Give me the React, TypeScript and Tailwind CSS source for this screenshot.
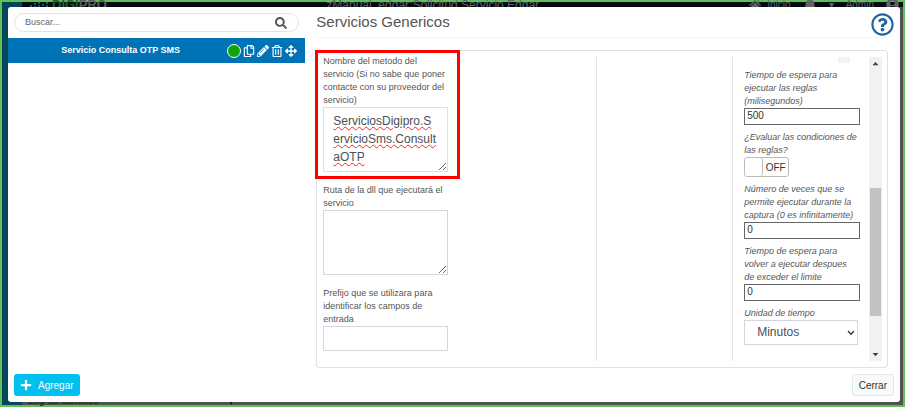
import { useState } from "react";
import {
  FaArrowsAlt,
  FaBell,
  FaHome,
  FaPencilAlt,
  FaPlus,
  FaRegCopy,
  FaRegQuestionCircle,
  FaRegTrashAlt,
  FaSearch,
  FaUserCircle,
} from "react-icons/fa";

const ACTIONS = [
  { id: "copy", label: "Copiar", Icon: FaRegCopy },
  { id: "edit", label: "Editar", Icon: FaPencilAlt },
  { id: "delete", label: "Eliminar", Icon: FaRegTrashAlt },
  { id: "move", label: "Mover", Icon: FaArrowsAlt },
];

// Dimmed page behind the dialog, only its edges are visible
function Backdrop() {
  return (
    <div className="absolute inset-0 -z-10 flex flex-col bg-[#505153]" aria-hidden="true">
      <div className="flex h-[5px] items-center bg-[#020c10] text-[12px] leading-3 text-[#606366]">
        <div className="flex w-1/3 items-center">
          <span className="h-[5px] w-5 bg-[#05465a]" />
          <svg viewBox="0 0 18 5" className="ml-2 h-[5px] w-[18px]" fill="#0f5a70">
            <path d="M0 3h2v2H0zM4 1h2v2H4zM4 4h2v1H4zM8 0h2v2H8zM8 3h2v2H8zM12 2h2v2h-2zM16 0h2v2h-2zM16 3h2v2h-2z" />
          </svg>
          <span className="ml-1 text-[13px] leading-3 font-bold text-[#5b5f61]">
            <span className="text-[#2a5a35]">DIGI</span>PRO
          </span>
        </div>
        <div className="flex flex-1 items-center justify-between pl-[24px]">
          <span>zManual_edgar:Solicitud Servicio Edgar</span>
          <div className="flex items-center gap-3 pr-1 text-[10px]">
            <span className="flex items-center gap-1.5"><FaHome size={12} /> Inicio</span>
            <FaBell size={14} />
            <span>▾</span>
            <span>Admin</span>
            <FaUserCircle size={13} />
          </div>
        </div>
      </div>
      <div className="flex flex-1 items-end">
        <div className="h-full w-5 bg-[#05465a]" />
        <span className="pl-1.5 text-[10px] leading-2 text-[#1d1d1d]">Log de cambios</span>
        <FaPlus size={10} className="ml-[127px] text-[#1d1d1d]" />
      </div>
    </div>
  );
}

function TextField({ id, label, value }: { id: string; label: string; value: string }) {
  return (
    <div className="flex flex-col">
      <label htmlFor={id} className="pr-0.5 italic">
        {label}
      </label>
      <input
        id={id}
        defaultValue={value}
        className="h-[17px] w-full border border-[#666] bg-white px-0.5 pb-0.5 text-[10px] text-[#333] outline-none"
      />
    </div>
  );
}

function Sidebar() {
  return (
    <aside className="w-1/3">
      <div className="mx-1.5 mt-1.5 flex h-[19px] items-center rounded-full border border-[#e3e3e3] pr-[11px] pl-[10px]">
        <input
          type="text"
          aria-label="Buscar"
          placeholder="Buscar..."
          className="min-w-0 flex-1 text-[9px] outline-none placeholder:text-[#666]"
        />
        <button aria-label="Buscar">
          <FaSearch size={12} className="text-[#555]" />
        </button>
      </div>
      <div className="mt-1.5 flex h-[25px] items-center bg-[#0073b7] pr-2 pl-1.5 text-white">
        <span className="flex-1 text-center text-[9px] font-bold">Servicio Consulta OTP SMS</span>
        <div className="flex items-center gap-0.5">
          <span className="size-[14px] rounded-full border border-white bg-[#0ca50c]" />
          {ACTIONS.map(({ id, label, Icon }) => (
            <button key={id} aria-label={label}>
              <Icon size={12} />
            </button>
          ))}
        </div>
      </div>
    </aside>
  );
}

export default function App() {
  const [metodo, setMetodo] = useState("ServiciosDigipro.ServicioSms.ConsultaOTP");
  const [evaluar, setEvaluar] = useState(false);

  return (
    <div className="flex min-h-screen bg-white pr-px pb-px font-['Liberation_Sans',sans-serif] text-[#555]">
      <div className="relative isolate flex flex-1 border-2 border-[#5fc05a]">
        <Backdrop />

        <div role="dialog" aria-labelledby="titulo" className="mt-[5px] mr-[3px] mb-[3px] ml-1.5 flex flex-1 flex-col rounded-[3px] bg-white">
          <div className="flex flex-1">
            <Sidebar />

            <main className="flex flex-1 flex-col pr-3 pl-[11px]">
              <header className="flex h-[31px] items-center justify-between border-b border-[#f4f4f4]">
                <h1 id="titulo" className="text-[15px] leading-5">
                  Servicios Genericos
                </h1>
                <button aria-label="Ayuda" className="-mr-1.5 pt-1">
                  <FaRegQuestionCircle size={23} className="text-[#1f63a0]" />
                </button>
              </header>

              <section className="mt-3 grid flex-1 grid-cols-[49%_24%_27%] rounded-[3px] border border-[#dee2e6] pt-1 pb-1.5 text-[9px] leading-[13px]">
                {/* Campos del servicio */}
                <div className="flex flex-col gap-3 pb-2.5 pl-1.5">
                  <div className="relative flex w-[125px] flex-col">
                    <label htmlFor="metodo">
                      Nombre del metodo del servicio (Si no sabe que poner contacte con su proveedor del servicio)
                    </label>
                    <textarea
                      id="metodo"
                      spellCheck={false}
                      value={metodo}
                      onChange={(e) => setMetodo(e.target.value)}
                      className="h-[65px] w-full resize-y overflow-hidden border border-[#dcdfe5] py-1 pr-2.5 pl-[9px] text-[12px] leading-[18px] break-all text-[#495057] underline decoration-[#f22] decoration-wavy decoration-1 underline-offset-1 outline-none"
                    />
                    <div className="pointer-events-none absolute -top-[5px] -right-3 -bottom-[7px] -left-2 border-3 border-[#f00]" />
                  </div>
                  <div className="flex w-[125px] flex-col">
                    <label htmlFor="ruta">Ruta de la dll que ejecutará el servicio</label>
                    <textarea
                      id="ruta"
                      className="h-[65px] w-full resize-y border border-[#d2d6de] px-[9px] py-1 text-[12px] outline-none"
                    />
                  </div>
                  <div className="flex w-[125px] flex-col">
                    <label htmlFor="prefijo">Prefijo que se utilizara para identificar los campos de entrada</label>
                    <input
                      id="prefijo"
                      className="h-[25px] w-full border border-[#d2d6de] px-[9px] text-[12px] outline-none"
                    />
                  </div>
                </div>

                <div className="mt-0.5 border-x border-[#dee2e6]" />

                {/* Reglas */}
                <div className="mt-0.5 flex pr-[5px] pl-[11px]">
                  <div className="flex flex-1 flex-col gap-1.5 pr-[9px] pb-4">
                    <div className="mr-0.5 flex h-1.5 justify-end rounded-b-[3px] pr-2">
                      <span className="w-3 bg-[#f3f3f3]" />
                    </div>
                    <TextField id="espera" label="Tiempo de espera para ejecutar las reglas (milisegundos)" value="500" />
                    <div className="flex flex-col">
                      <span id="evaluar" className="italic">
                        ¿Evaluar las condiciones de las reglas?
                      </span>
                      <button
                        role="switch"
                        aria-checked={evaluar}
                        aria-labelledby="evaluar"
                        onClick={() => setEvaluar(!evaluar)}
                        className="flex h-5 w-[45px] items-center rounded-[3px] border border-[#bbb] text-[10px] text-[#333]"
                      >
                        <span className="h-full w-[18px] rounded-[3px] border-r border-[#bbb] bg-white" />
                        <span className="flex-1 text-center">{evaluar ? "ON" : "OFF"}</span>
                      </button>
                    </div>
                    <TextField
                      id="veces"
                      label="Número de veces que se permite ejecutar durante la captura (0 es infinitamente)"
                      value="0"
                    />
                    <TextField
                      id="limite"
                      label="Tiempo de espera para volver a ejecutar despues de exceder el limite"
                      value="0"
                    />
                    <div className="flex flex-col">
                      <label htmlFor="unidad" className="italic">
                        Unidad de tiempo
                      </label>
                      <div className="relative mr-0.5">
                        <select
                          id="unidad"
                          className="h-[25px] w-full appearance-none border border-[#d2d6de] bg-white pl-3 text-[12px] text-[#495057] outline-none"
                        >
                          <option>Minutos</option>
                          <option>Horas</option>
                        </select>
                        <svg viewBox="0 0 8 6" className="pointer-events-none absolute top-[10px] right-[3px] h-1.5 w-2" fill="none">
                          <path d="M1 1l3 3.2L7 1" stroke="#333" strokeWidth="1.3" />
                        </svg>
                      </div>
                    </div>
                  </div>

                  {/* Barra de desplazamiento */}
                  <div className="flex w-[13px] flex-col items-center bg-[#f1f1f1]">
                    <svg viewBox="0 0 13 13" className="h-[13px] w-[13px]">
                      <path d="M3.5 8.2h6L6.5 5z" fill="#444" />
                    </svg>
                    <div className="flex w-full flex-1 flex-col">
                      <div className="flex-[118]" />
                      <div className="mx-px flex-[128] bg-[#c1c1c1]" />
                      <div className="flex-[32]" />
                    </div>
                    <svg viewBox="0 0 13 13" className="h-[13px] w-[13px]">
                      <path d="M3.5 5h6L6.5 8.2z" fill="#444" />
                    </svg>
                  </div>
                </div>
              </section>
            </main>
          </div>

          <footer className="flex items-center justify-between p-1.5 text-[10px]">
            <button className="flex h-[22px] items-center gap-1.5 rounded-[3px] bg-[#00c0ef] px-1.5 text-white">
              <FaPlus size={12} /> Agregar
            </button>
            <button className="h-[22px] rounded-[3px] border border-[#e4e7ea] bg-[#f8f9fa] px-1.5 text-[#333]">
              Cerrar
            </button>
          </footer>
        </div>
      </div>
    </div>
  );
}
